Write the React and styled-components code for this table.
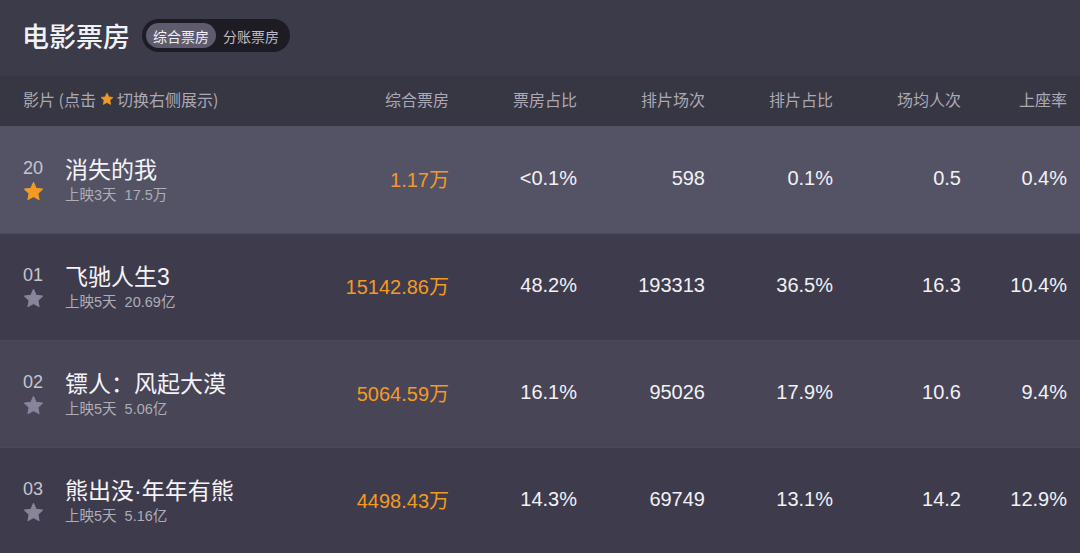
import styled, { createGlobalStyle } from "styled-components";

const GlobalStyle = createGlobalStyle`
  html, body {
    margin: 0;
    padding: 0;
    background: #3c3b49;
  }
  body {
    font-family: "Liberation Sans", "Noto Sans CJK SC", sans-serif;
  }
`;

const Page = styled.div`
  width: 1080px;
  height: 553px;
  overflow: hidden;
  background: #3c3b49;
`;

const TopBar = styled.div`
  height: 76px;
  display: flex;
  align-items: center;
  padding: 0 0 5px 22px;
  box-sizing: border-box;
  gap: 12px;
`;

const Title = styled.h1`
  margin: 0;
  font-size: 27px;
  font-weight: 500;
  color: #f2f1f5;
  font-family: "Noto Sans CJK SC", sans-serif;
`;

const Toggle = styled.div`
  display: flex;
  align-items: center;
  height: 33px;
  padding: 0 4px;
  border-radius: 17px;
  background: #1d1c24;
  box-sizing: border-box;
`;

const ToggleItem = styled.div`
  height: 25px;
  padding: 0 7px;
  border-radius: 13px;
  display: flex;
  align-items: center;
  font-size: 14px;
  font-family: "Noto Sans CJK SC", sans-serif;
  color: ${(p) => (p.$active ? "#f0eff4" : "#bdbcc6")};
  background: ${(p) => (p.$active ? "#5d5b6d" : "transparent")};
`;

const Grid = styled.div`
  display: grid;
  grid-template-columns: 298px repeat(5, 128px) 106px;
  padding: 0 13px 0 23px;
  align-items: center;
  background: ${(p) => p.$bg};
  height: ${(p) => p.$h}px;
  border-top: ${(p) => (p.$line ? "1px solid #4c4a5a" : "none")};
  box-sizing: border-box;
`;

const HeadCell = styled.div`
  font-size: 16px;
  color: #aba9b6;
  font-family: "Noto Sans CJK SC", sans-serif;
  display: flex;
  align-items: center;
  margin-top: -5px;
  justify-content: ${(p) => (p.$left ? "flex-start" : "flex-end")};
`;

const HeadStar = styled.span`
  display: inline-flex;
  margin: 0 3px 0 4px;
`;

const NameCell = styled.div`
  display: flex;
  align-items: flex-start;
  margin-top: 0;
`;

const RankCol = styled.div`
  width: 42px;
  display: flex;
  flex-direction: column;
  align-items: flex-start;
`;

const Rank = styled.div`
  font-size: 18px;
  color: #c6c5cf;
  line-height: 24px;
  margin-top: 1px;
`;

const StarWrap = styled.div`
  margin-top: 1px;
  display: flex;
`;

const Info = styled.div`
  display: flex;
  flex-direction: column;
`;

const Movie = styled.div`
  font-size: 23px;
  line-height: 30px;
  color: #f4f3f7;
  font-family: "Liberation Sans", "Noto Sans CJK SC", sans-serif;
`;

const Sub = styled.div`
  font-size: 14.5px;
  line-height: 20px;
  color: #aeadb8;
  font-family: "Liberation Sans", "Noto Sans CJK SC", sans-serif;
  word-spacing: 4px;
`;

const Value = styled.div`
  text-align: right;
  font-size: 20px;
  margin-top: -3px;
  color: ${(p) => (p.$orange ? "#f39a24" : "#f2f1f5")};
  font-family: "Liberation Sans", "Noto Sans CJK SC", sans-serif;
`;

const Star = ({ color, size }) => (
  <svg width={size} height={size} viewBox="0 0 24 24">
    <path
      d="M12 1.8l3.1 6.6 7.1.9-5.2 4.9 1.3 7.1L12 17.8l-6.3 3.5 1.3-7.1-5.2-4.9 7.1-.9z"
      fill={color}
      stroke={color}
      strokeWidth="1.2"
      strokeLinejoin="round"
    />
  </svg>
);

const rows = [
  { rank: "20", name: "消失的我", sub: "上映3天 17.5万", box: "1.17万", share: "<0.1%", shows: "598", showShare: "0.1%", avg: "0.5", seat: "0.4%", bg: "#545366", fav: true },
  { rank: "01", name: "飞驰人生3", sub: "上映5天 20.69亿", box: "15142.86万", share: "48.2%", shows: "193313", showShare: "36.5%", avg: "16.3", seat: "10.4%", bg: "#3e3c4c" },
  { rank: "02", name: "镖人：风起大漠", sub: "上映5天 5.06亿", box: "5064.59万", share: "16.1%", shows: "95026", showShare: "17.9%", avg: "10.6", seat: "9.4%", bg: "#474556" },
  { rank: "03", name: "熊出没·年年有熊", sub: "上映5天 5.16亿", box: "4498.43万", share: "14.3%", shows: "69749", showShare: "13.1%", avg: "14.2", seat: "12.9%", bg: "#3e3c4c" },
];

const heads = ["综合票房", "票房占比", "排片场次", "排片占比", "场均人次", "上座率"];

export default function App() {
  return (
    <Page>
      <GlobalStyle />
      <TopBar>
        <Title>电影票房</Title>
        <Toggle>
          <ToggleItem $active>综合票房</ToggleItem>
          <ToggleItem>分账票房</ToggleItem>
        </Toggle>
      </TopBar>
      <Grid $bg="#373643" $h={50}>
        <HeadCell $left>
          影片 (点击
          <HeadStar>
            <Star color="#f39a24" size={14} />
          </HeadStar>
          切换右侧展示)
        </HeadCell>
        {heads.map((h) => (
          <HeadCell key={h}>{h}</HeadCell>
        ))}
      </Grid>
      {rows.map((r, i) => (
        <Grid key={r.rank} $bg={r.bg} $h={107} $line={i > 0}>
          <NameCell>
            <RankCol>
              <Rank>{r.rank}</Rank>
              <StarWrap>
                <Star color={r.fav ? "#f39a24" : "#87859a"} size={21} />
              </StarWrap>
            </RankCol>
            <Info>
              <Movie>{r.name}</Movie>
              <Sub>{r.sub}</Sub>
            </Info>
          </NameCell>
          <Value $orange>{r.box}</Value>
          <Value>{r.share}</Value>
          <Value>{r.shows}</Value>
          <Value>{r.showShare}</Value>
          <Value>{r.avg}</Value>
          <Value>{r.seat}</Value>
        </Grid>
      ))}
    </Page>
  );
}
